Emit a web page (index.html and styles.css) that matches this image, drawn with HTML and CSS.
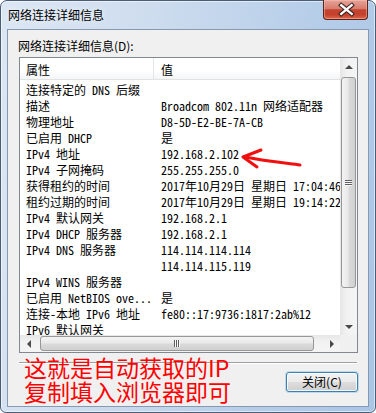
FILE: index.html
```html
<!DOCTYPE html>
<html>

<head>
    <meta charset="UTF-8">
    <title>网络连接详细信息</title>
    <link rel="stylesheet" href="styles.css">
</head>

<body>
    <div class="window">
        <div class="titlebar">
            <span class="title">网络连接详细信息</span>
            <button class="close-btn" title="关闭">
                <svg width="45" height="20" viewBox="0 0 45 20">
                    <path d="M18 5 L29 14 M29 5 L18 14" stroke="#3b2320" stroke-width="4.6" stroke-linecap="square" />
                    <path d="M18 5 L29 14 M29 5 L18 14" stroke="#fff" stroke-width="2.4" stroke-linecap="square" />
                </svg>
            </button>
        </div>

        <div class="client">
            <div class="label">网络连接详细信息(D):</div>

            <div class="listbox">
                <div class="viewport">
                    <div class="header">
                        <div class="col prop">属性</div>
                        <div class="col val">值</div>
                    </div>
                    <div class="rows">
                        <div class="row"><span class="prop">连接特定的 DNS 后缀</span><span class="val"></span></div>
                        <div class="row"><span class="prop">描述</span><span class="val">Broadcom 802.11n 网络适配器</span></div>
                        <div class="row"><span class="prop">物理地址</span><span class="val">D8-5D-E2-BE-7A-CB</span></div>
                        <div class="row"><span class="prop">已启用 DHCP</span><span class="val">是</span></div>
                        <div class="row"><span class="prop">IPv4 地址</span><span class="val">192.168.2.102</span></div>
                        <div class="row"><span class="prop">IPv4 子网掩码</span><span class="val">255.255.255.0</span></div>
                        <div class="row"><span class="prop">获得租约的时间</span><span class="val">2017年10月29日 星期日 17:04:46</span></div>
                        <div class="row"><span class="prop">租约过期的时间</span><span class="val">2017年10月29日 星期日 19:14:22</span></div>
                        <div class="row"><span class="prop">IPv4 默认网关</span><span class="val">192.168.2.1</span></div>
                        <div class="row"><span class="prop">IPv4 DHCP 服务器</span><span class="val">192.168.2.1</span></div>
                        <div class="row"><span class="prop">IPv4 DNS 服务器</span><span class="val">114.114.114.114</span></div>
                        <div class="row"><span class="prop"></span><span class="val">114.114.115.119</span></div>
                        <div class="row"><span class="prop">IPv4 WINS 服务器</span><span class="val"></span></div>
                        <div class="row"><span class="prop">已启用 NetBIOS ove...</span><span class="val">是</span></div>
                        <div class="row"><span class="prop">连接-本地 IPv6 地址</span><span class="val">fe80::17:9736:1817:2ab%12</span></div>
                        <div class="row"><span class="prop">IPv6 默认网关</span><span class="val"></span></div>
                    </div>
                </div>

                <div class="vscroll">
                    <div class="arrow-box"><span class="tri up"></span></div>
                    <div class="track">
                        <div class="thumb"><span class="grip"></span></div>
                    </div>
                    <div class="arrow-box"><span class="tri down"></span></div>
                </div>

                <div class="hscroll">
                    <div class="arrow-box"><span class="tri left"></span></div>
                    <div class="track">
                        <div class="thumb"><span class="grip"></span></div>
                    </div>
                    <div class="arrow-box"><span class="tri right"></span></div>
                </div>

                <div class="corner"></div>
            </div>

            <div class="separator"></div>

            <div class="footer">
                <button class="btn">关闭(C)</button>
            </div>
        </div>

        <!-- red annotation drawn over the dialog -->
        <div class="note">这就是自动获取的IP<br>复制填入浏览器即可</div>
        <svg class="arrow" width="376" height="413" viewBox="0 0 376 413">
            <path d="M300 165 C285 163 265 161 245 157" fill="none" stroke="#f01010" stroke-width="3" stroke-linecap="round" />
            <path d="M261 150 L243 157 L257 167" fill="none" stroke="#f01010" stroke-width="3" stroke-linecap="round" stroke-linejoin="round" />
        </svg>
    </div>
</body>

</html>
```

FILE: styles.css
```css
* {
    box-sizing: border-box;
}

html,
body {
    margin: 0;
    background: #fff;
}

body {
    font-family: "Noto Sans CJK SC", sans-serif;
    font-size: 12px;
    color: #000;
}

.window {
    position: relative;
    width: 376px;
    height: 413px;
    display: flex;
    flex-direction: column;
    padding: 0 6px 5px 6px;
    border: 1px solid #4a5d75;
    border-radius: 7px 7px 6px 6px;
    background: linear-gradient(100deg, #dce7f4 0%, #cddcee 35%, #b7cee9 70%, #a9c5e6 100%);
    box-shadow: inset 0 0 0 1px rgba(255, 255, 255, 0.55);
}

.titlebar {
    height: 28px;
    display: flex;
    justify-content: space-between;
    align-items: flex-start;
}

.title {
    padding: 6px 0 0 1px;
    line-height: 16px;
    font-size: 12px;
    text-shadow: 0 0 6px rgba(255, 255, 255, 0.9);
}

.close-btn {
    width: 45px;
    height: 20px;
    margin: -1px 1px 0 0;
    padding: 0;
    border: 1px solid #5b2218;
    border-top: none;
    border-radius: 0 0 4px 4px;
    background: linear-gradient(#e6a599 0%, #d77c6d 45%, #c3432f 52%, #c5412c 78%, #dc6a4c 100%);
    box-shadow: inset 0 0 0 1px rgba(255, 200, 190, 0.45);
    display: flex;
}

.client {
    flex: 1;
    display: flex;
    flex-direction: column;
    background: #f0f0f0;
    border: 1px solid #8799b0;
}

.label {
    margin: 8px 0 3px 10px;
    line-height: 16px;
}

.listbox {
    margin: 0 10px 0 11px;
    height: 296px;
    border: 1px solid #828790;
    background: #fff;
    display: grid;
    grid-template-columns: 1fr 17px;
    grid-template-rows: 1fr 17px;
}

.viewport {
    overflow: hidden;
}

.header {
    display: flex;
    height: 22px;
    border-bottom: 1px solid #e2e2e2;
    background: linear-gradient(#ffffff, #ffffff 60%, #f4f5f7);
}

.header .col {
    line-height: 22px;
    padding-top: 1px;
}

.header .prop {
    width: 134px;
    padding-left: 6px;
    border-right: 1px solid #e3e5e8;
}

.header .val {
    padding-left: 7px;
}

.rows {
    padding-top: 2px;
    font-family: "Noto Sans Mono CJK SC", "Noto Sans CJK SC", monospace;
}

.row {
    display: flex;
    height: 16px;
    line-height: 16px;
    white-space: nowrap;
}

.row .prop {
    flex: 0 0 134px;
    padding-left: 6px;
    overflow: hidden;
}

.row .val {
    padding-left: 7px;
}

/* scrollbars */
.vscroll,
.hscroll {
    display: flex;
    background: linear-gradient(to right, #e6e6e6, #f2f2f2 40%, #f4f4f4);
}

.vscroll {
    flex-direction: column;
}

.hscroll {
    background: linear-gradient(#e6e6e6, #f2f2f2 40%, #f4f4f4);
}

.arrow-box {
    flex: 0 0 17px;
    display: flex;
    align-items: center;
    justify-content: center;
}

.track {
    flex: 1;
    display: flex;
}

.vscroll .track {
    flex-direction: column;
    padding: 2px 1px 30px 1px;
}

.hscroll .track {
    padding: 1px 9px 1px 3px;
}

.thumb {
    flex: 1;
    border: 1px solid #979797;
    border-radius: 3px;
    display: flex;
    align-items: center;
    justify-content: center;
}

.vscroll .thumb {
    background: linear-gradient(to right, #f3f3f3, #e9e9e9 45%, #dadada 55%, #d0d0d0);
}

.hscroll .thumb {
    background: linear-gradient(#f3f3f3, #e9e9e9 45%, #dadada 55%, #d0d0d0);
}

.grip {
    width: 7px;
    height: 7px;
}

.vscroll .grip {
    background: repeating-linear-gradient(#5e5e5e 0 1px, #f8f8f8 1px 2px);
    height: 6px;
}

.hscroll .grip {
    background: repeating-linear-gradient(to right, #5e5e5e 0 1px, #f8f8f8 1px 2px);
    width: 6px;
}

.tri {
    width: 0;
    height: 0;
    border: 4px solid transparent;
}

.tri.up {
    border-bottom-color: #4a4a4a;
    border-top-width: 0;
}

.tri.down {
    border-top-color: #4a4a4a;
    border-bottom-width: 0;
}

.tri.left {
    border-right-color: #4a4a4a;
    border-left-width: 0;
}

.tri.right {
    border-left-color: #4a4a4a;
    border-right-width: 0;
}

.corner {
    background: #f0f0f0;
}

.separator {
    margin: 9px 11px 0 11px;
    height: 2px;
    border-top: 1px solid #a0a0a0;
    border-bottom: 1px solid #fff;
}

.footer {
    display: flex;
    justify-content: flex-end;
    padding: 8px 10px 0 0;
}

.btn {
    width: 72px;
    height: 20px;
    padding: 0;
    font-family: "Noto Sans CJK SC", sans-serif;
    font-size: 12px;
    line-height: 16px;
    color: #000;
    border: 1px solid #3c7fb1;
    border-radius: 3px;
    background: linear-gradient(#f2f2f2 0%, #ebebeb 48%, #dddddd 52%, #cfcfcf 100%);
    box-shadow: 0 0 0 1px rgba(90, 180, 230, 0.35), inset 0 0 0 1px rgba(255, 255, 255, 0.8);
}

/* annotation */
.note {
    position: absolute;
    left: 23px;
    top: 354px;
    font-size: 23px;
    line-height: 24px;
    color: #ff0000;
    white-space: nowrap;
}

.arrow {
    position: absolute;
    left: -1px;
    top: -1px;
    pointer-events: none;
}
```
